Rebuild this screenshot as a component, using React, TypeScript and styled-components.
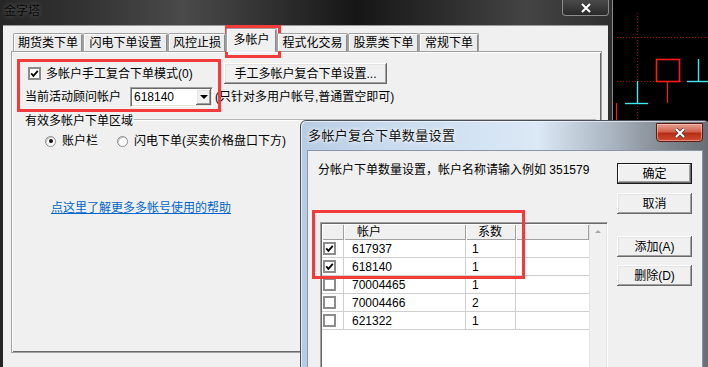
import React from "react"
import styled, { createGlobalStyle, css } from "styled-components"

const GlobalStyle = createGlobalStyle`
  html, body {
    margin: 0;
    padding: 0;
    background: #000;
  }
  body {
    font-family: "Liberation Sans", "Noto Sans CJK SC", sans-serif;
    font-size: 12px;
    color: #000;
  }
`

const raised = css`
  background: #f0f0f0;
  box-shadow: inset -1px -1px 0 #696969, inset 1px 1px 0 #ffffff,
    inset -2px -2px 0 #a0a0a0, inset 2px 2px 0 #e3e3e3;
`

const sunken = css`
  border: 1px solid;
  border-color: #a0a0a0 #ffffff #ffffff #a0a0a0;
  box-shadow: inset 1px 1px 0 #696969, inset -1px -1px 0 #e3e3e3;
`

const Desktop = styled.div`
  position: relative;
  width: 708px;
  height: 367px;
  overflow: hidden;
  background: #000;
`

const Chart = styled.svg`
  position: absolute;
  left: 613px;
  top: 0;
`

const MainWindow = styled.div`
  position: absolute;
  left: 0;
  top: 0;
  width: 613px;
  height: 380px;
  display: flex;
  flex-direction: column;
  background: linear-gradient(
    to right,
    #262626 0%,
    #333 14%,
    #4a4a4a 30%,
    #2f2f2f 45%,
    #161616 58%,
    #2c2c2c 72%,
    #444 86%,
    #2e2e2e 100%
  );
  box-shadow: inset -1px 0 0 #8a8a8a;
`

const TitleBar = styled.div`
  height: 25px;
  flex-shrink: 0;
  display: flex;
  align-items: flex-start;
`

const WindowTitle = styled.div`
  padding-left: 4px;
  line-height: 22px;
  font-size: 12px;
  color: #080808;
  text-shadow: 0 0 5px rgba(255, 255, 255, 0.35);
`

const CloseButton = styled.div<{ danger?: boolean }>`
  margin-left: auto;
  width: 47px;
  height: 16px;
  box-sizing: border-box;
  display: flex;
  align-items: center;
  justify-content: center;
  border: 1px solid #8c8c8c;
  border-top: none;
  border-radius: 0 0 4px 4px;
  background: linear-gradient(#4a4a4a, #2a2a2a);
  ${(p) =>
    p.danger &&
    css`
      height: 19px;
      margin-top: 2px;
      border: 1px solid #5a1b12;
      border-top: 1px solid #5a1b12;
      border-radius: 0 0 4px 4px;
      background: linear-gradient(#e6a193 0%, #d2614d 45%, #b72d17 55%, #cf4b31 100%);
      box-shadow: inset 0 0 0 1px rgba(255, 210, 200, 0.5);
    `}
`

const MainClose = styled(CloseButton)`
  margin-right: 4px;
`

const DialogClose = styled(CloseButton)`
  margin-right: 6px;
`

const Client = styled.div`
  flex: 1;
  margin: 0 5px 0 3px;
  display: flex;
  flex-direction: column;
  background: #f0f0f0;
  border-top: 1px solid #9a9a9a;
`

const TabStrip = styled.div`
  height: 25px;
  padding-left: 10px;
  display: flex;
  align-items: flex-end;
`

const Tab = styled.div<{ w: number; active?: boolean }>`
  width: ${(p) => p.w}px;
  height: ${(p) => (p.active ? 24 : 18)}px;
  box-sizing: border-box;
  display: flex;
  align-items: center;
  justify-content: center;
  white-space: nowrap;
  font-size: 12px;
  line-height: 14px;
  background: ${(p) => (p.active ? "#f0f0f0" : "#ececec")};
  border: 1px solid #a0a0a0;
  border-bottom: none;
  border-radius: 2px 2px 0 0;
  box-shadow: inset 1px 1px 0 #fff, inset -1px 0 0 #8a8a8a;
  margin-bottom: ${(p) => (p.active ? -1 : 0)}px;
  position: relative;
  z-index: ${(p) => (p.active ? 2 : 1)};
  padding-bottom: ${(p) => (p.active ? 2 : 0)}px;
`

const TabPanel = styled.div`
  height: 302px;
  margin: 0 6px 0 8px;
  box-sizing: border-box;
  padding: 11px 0 0 13px;
  display: flex;
  flex-direction: column;
  background: #f0f0f0;
  border: 1px solid #a0a0a0;
  box-shadow: inset 1px 1px 0 #fff, inset -1px -1px 0 #696969;
`

const Row = styled.div<{ mt?: number; h: number }>`
  display: flex;
  align-items: center;
  height: ${(p) => p.h}px;
  margin-top: ${(p) => p.mt ?? 0}px;
  white-space: nowrap;
`

const CheckField = styled.div`
  width: 196px;
  margin-left: 3px;
  display: flex;
  align-items: center;
  gap: 5px;
`

const Text = styled.span`
  font-size: 12px;
  line-height: 14px;
`

const CheckBoxBox = styled.div`
  width: 13px;
  height: 13px;
  box-sizing: border-box;
  flex-shrink: 0;
  border: 2px solid #8c8c8c;
  background: #fff;
  display: flex;
  align-items: center;
  justify-content: center;
`

const CheckBox = ({ checked }: { checked?: boolean }) => (
  <CheckBoxBox>
    {checked && (
      <svg width="9" height="9" viewBox="0 0 9 9">
        <path d="M1.2 4.4 L3.4 6.8 L7.8 1.8" fill="none" stroke="#000" strokeWidth="1.8" />
      </svg>
    )}
  </CheckBoxBox>
)

const PushButton = styled.div<{ w: number; mt?: number; isDefault?: boolean }>`
  ${raised};
  width: ${(p) => p.w}px;
  height: 21px;
  margin-top: ${(p) => p.mt ?? 0}px;
  flex-shrink: 0;
  box-sizing: border-box;
  display: flex;
  align-items: center;
  justify-content: center;
  font-size: 12px;
  line-height: 14px;
  white-space: nowrap;
  ${(p) =>
    p.isDefault &&
    css`
      box-shadow: inset 0 0 0 1px #1a1a1a, inset -2px -2px 0 #696969,
        inset 2px 2px 0 #fff, inset -3px -3px 0 #a0a0a0;
    `}
`

const FieldLabel = styled.span`
  width: 105px;
  font-size: 12px;
  line-height: 14px;
`

const Combo = styled.div`
  ${sunken};
  width: 83px;
  height: 20px;
  box-sizing: border-box;
  padding: 1px 1px 1px 3px;
  display: flex;
  align-items: center;
  background: #fff;
`

const ComboValue = styled.span`
  flex: 1;
  font-size: 12px;
  line-height: 14px;
`

const ComboArrow = styled.div`
  ${raised};
  width: 15px;
  height: 16px;
  display: flex;
  align-items: center;
  justify-content: center;
  &::after {
    content: "";
    border-left: 4px solid transparent;
    border-right: 4px solid transparent;
    border-top: 4px solid #000;
  }
`

const Note = styled.span`
  margin-left: 2px;
  font-size: 12px;
  line-height: 14px;
`

const GroupHead = styled.div`
  margin-top: 7px;
  height: 14px;
  display: flex;
  align-items: flex-start;
  white-space: nowrap;
`

const GroupRule = styled.div`
  flex: 1;
  margin: 5px 5px 0 1px;
  border-top: 1px solid #b5b5b5;
  border-bottom: 1px solid #fff;
`

const RadioOption = styled.label<{ ml: number }>`
  margin-left: ${(p) => p.ml}px;
  display: flex;
  align-items: center;
  gap: 6px;
`

const RadioDot = styled.span<{ on?: boolean }>`
  width: 11px;
  height: 11px;
  box-sizing: border-box;
  border-radius: 50%;
  border: 1px solid #8a8a8a;
  background: #fff;
  box-shadow: inset 1px 1px 0 #c8c8c8;
  display: flex;
  align-items: center;
  justify-content: center;
  &::after {
    content: "";
    width: 4px;
    height: 4px;
    border-radius: 50%;
    background: ${(p) => (p.on ? "#111" : "transparent")};
  }
`

const HelpLink = styled.a`
  margin: 54px 0 0 26px;
  align-self: flex-start;
  font-size: 12px;
  line-height: 14px;
  color: #0066cc;
  text-decoration: underline;
  cursor: pointer;
`

const Dialog = styled.div`
  position: absolute;
  left: 300px;
  top: 120px;
  width: 410px;
  height: 262px;
  box-sizing: border-box;
  display: flex;
  flex-direction: column;
  border: 1px solid #48505b;
  border-radius: 6px 6px 0 0;
  background: linear-gradient(
    to right,
    #b7cbe2 0%,
    #c6d8ec 18%,
    #d3e3f3 42%,
    #dbe8f5 58%,
    #aab5c1 76%,
    #7f868e 90%,
    #696e75 100%
  );
  box-shadow: inset 1px 1px 0 rgba(255, 255, 255, 0.6);
`

const DialogTitleBar = styled.div`
  height: 29px;
  flex-shrink: 0;
  display: flex;
  align-items: flex-start;
`

const DialogTitle = styled.div`
  padding-left: 7px;
  line-height: 30px;
  font-size: 13px;
  letter-spacing: 0.4px;
  color: #111;
  text-shadow: 0 0 6px #fff, 0 0 3px #fff;
`

const DialogClient = styled.div`
  flex: 1;
  margin: 0 6px;
  display: flex;
  padding: 12px 0 0 10px;
  background: #f0f0f0;
  border: 1px solid #8796a8;
`

const DialogMain = styled.div`
  width: 290px;
  display: flex;
  flex-direction: column;
`

const Prompt = styled.div`
  font-size: 12px;
  line-height: 14px;
  white-space: nowrap;
`

const ListView = styled.div`
  ${sunken};
  margin: 45px 0 0 2px;
  width: 288px;
  height: 160px;
  box-sizing: border-box;
  padding: 1px;
  display: flex;
  background: #fff;
`

const ListTable = styled.div`
  flex: 1;
  display: flex;
  flex-direction: column;
`

const HeaderRow = styled.div`
  height: 16px;
  display: flex;
`

const HeaderCell = styled.div<{ w?: number }>`
  ${(p) => (p.w ? `width: ${p.w}px;` : "flex: 1;")}
  box-sizing: border-box;
  padding-left: 12px;
  font-size: 12px;
  line-height: 16px;
  background: #f0f0f0;
  box-shadow: inset 1px 1px 0 #fff, inset -1px -1px 0 #a0a0a0;
`

const DataRow = styled.div`
  height: 18px;
  box-sizing: border-box;
  display: flex;
  border-bottom: 1px solid #cfcfcf;
`

const DataCell = styled.div<{ w?: number; pl?: number }>`
  ${(p) => (p.w ? `width: ${p.w}px;` : "flex: 1;")}
  box-sizing: border-box;
  display: flex;
  align-items: center;
  padding-left: ${(p) => p.pl ?? 0}px;
  font-size: 12px;
  line-height: 14px;
  border-right: 1px solid #cfcfcf;
`

const ScrollTrack = styled.div`
  width: 16px;
  background: #f0f0f0;
  border-left: 1px solid #e2e2e2;
  display: flex;
  justify-content: center;
  &::before {
    content: "";
    margin-top: 6px;
    height: 0;
    border-left: 3px solid transparent;
    border-right: 3px solid transparent;
    border-bottom: 3px solid #a8a8a8;
  }
`

const ButtonColumn = styled.div`
  margin-left: 9px;
  display: flex;
  flex-direction: column;
`

const Highlight = styled.div<{ x: number; y: number; w: number; h: number }>`
  position: absolute;
  left: ${(p) => p.x}px;
  top: ${(p) => p.y}px;
  width: ${(p) => p.w}px;
  height: ${(p) => p.h}px;
  box-sizing: border-box;
  border: 3px solid #f33b3b;
  pointer-events: none;
`

const CloseGlyph = () => (
  <svg width="12" height="10" viewBox="0 0 12 10">
    <path d="M2 1 L10 9 M10 1 L2 9" stroke="#3a3a3a" strokeWidth="3.4" />
    <path d="M2 1 L10 9 M10 1 L2 9" stroke="#fff" strokeWidth="2" />
  </svg>
)

const tabs = [
  { label: "期货类下单", w: 70 },
  { label: "闪电下单设置", w: 85 },
  { label: "风控止损", w: 58 },
  { label: "多帐户", w: 51, active: true },
  { label: "程式化交易", w: 71 },
  { label: "股票类下单", w: 71 },
  { label: "常规下单", w: 60 },
]

const accounts = [
  { id: "617937", ratio: "1", checked: true },
  { id: "618140", ratio: "1", checked: true },
  { id: "70004465", ratio: "1" },
  { id: "70004466", ratio: "2" },
  { id: "621322", ratio: "1" },
]

export default function App() {
  return (
    <Desktop>
      <GlobalStyle />
      <Chart width="95" height="125" viewBox="0 0 95 125">
        <g stroke="#b00000" strokeWidth="1" strokeDasharray="1 2">
          <line x1="24.5" y1="13" x2="24.5" y2="125" />
          <line x1="4" y1="37.5" x2="95" y2="37.5" />
          <line x1="4" y1="81.5" x2="95" y2="81.5" />
        </g>
        <rect x="43.5" y="59.5" width="23" height="22" fill="none" stroke="#ff1a1a" strokeWidth="1.6" />
        <line x1="54.5" y1="82" x2="54.5" y2="103" stroke="#ff1a1a" strokeWidth="1.2" />
        <line x1="3.5" y1="103" x2="3.5" y2="125" stroke="#ff1a1a" strokeWidth="1.2" />
        <g stroke="#40e8f0" strokeWidth="1.4">
          <line x1="24.5" y1="81" x2="24.5" y2="103" />
          <line x1="12" y1="103.5" x2="35" y2="103.5" />
          <line x1="85.5" y1="59" x2="85.5" y2="81" />
          <line x1="74" y1="81.5" x2="95" y2="81.5" />
        </g>
      </Chart>

      <MainWindow>
        <TitleBar>
          <WindowTitle>金字塔</WindowTitle>
          <MainClose>
            <CloseGlyph />
          </MainClose>
        </TitleBar>
        <Client>
          <TabStrip>
            {tabs.map((t) => (
              <Tab key={t.label} w={t.w} active={t.active}>
                {t.label}
              </Tab>
            ))}
          </TabStrip>
          <TabPanel>
            <Row h={21}>
              <CheckField>
                <CheckBox checked />
                <Text>多帐户手工复合下单模式(0)</Text>
              </CheckField>
              <PushButton w={163}>手工多帐户复合下单设置...</PushButton>
            </Row>
            <Row h={20} mt={3}>
              <FieldLabel>当前活动顾问帐户</FieldLabel>
              <Combo>
                <ComboValue>618140</ComboValue>
                <ComboArrow />
              </Combo>
              <Note>(只针对多用户帐号,普通置空即可)</Note>
            </Row>
            <GroupHead>
              <Text>有效多帐户下单区域</Text>
              <GroupRule />
            </GroupHead>
            <Row h={12} mt={7}>
              <RadioOption ml={20}>
                <RadioDot on />
                <Text>账户栏</Text>
              </RadioOption>
              <RadioOption ml={19}>
                <RadioDot />
                <Text>闪电下单(买卖价格盘口下方)</Text>
              </RadioOption>
            </Row>
            <HelpLink>点这里了解更多多帐号使用的帮助</HelpLink>
          </TabPanel>
        </Client>
      </MainWindow>

      <Dialog>
        <DialogTitleBar>
          <DialogTitle>多帐户复合下单数量设置</DialogTitle>
          <DialogClose danger>
            <CloseGlyph />
          </DialogClose>
        </DialogTitleBar>
        <DialogClient>
          <DialogMain>
            <Prompt>分帐户下单数量设置，帐户名称请输入例如 351579</Prompt>
            <ListView>
              <ListTable>
                <HeaderRow>
                  <HeaderCell w={22} />
                  <HeaderCell w={122} style={{ paddingLeft: 13 }}>
                    帐户
                  </HeaderCell>
                  <HeaderCell w={50}>系数</HeaderCell>
                  <HeaderCell />
                </HeaderRow>
                {accounts.map((a) => (
                  <DataRow key={a.id}>
                    <DataCell w={22} pl={1}>
                      <CheckBox checked={a.checked} />
                    </DataCell>
                    <DataCell w={122} pl={8}>
                      {a.id}
                    </DataCell>
                    <DataCell w={50} pl={6}>
                      {a.ratio}
                    </DataCell>
                    <DataCell style={{ borderRight: "none" }} />
                  </DataRow>
                ))}
              </ListTable>
              <ScrollTrack />
            </ListView>
          </DialogMain>
          <ButtonColumn>
            <PushButton w={75} isDefault>
              确定
            </PushButton>
            <PushButton w={75} mt={9}>
              取消
            </PushButton>
            <PushButton w={75} mt={22}>
              添加(A)
            </PushButton>
            <PushButton w={75} mt={8}>
              删除(D)
            </PushButton>
          </ButtonColumn>
        </DialogClient>
      </Dialog>

      <Highlight x={225} y={25} w={56} h={33} />
      <Highlight x={17} y={59} w={204} h={53} />
      <Highlight x={312} y={210} w={213} h={69} />
    </Desktop>
  )
}
